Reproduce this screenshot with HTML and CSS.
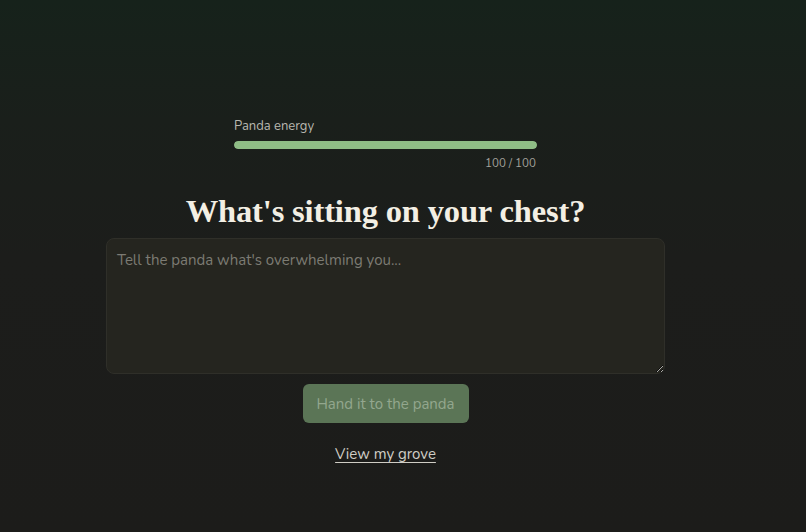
FILE: index.html
```html
<!DOCTYPE html>
<html>
<head>
<meta charset="utf-8">
<link rel="stylesheet" href="styles.css">
</head>
<body>
<main class="page">
  <section class="energy">
    <div class="energy-label">Panda energy</div>
    <div class="energy-track"><div class="energy-fill" style="width:100%"></div></div>
    <div class="energy-count">100 / 100</div>
  </section>
  <h1 class="title">What's sitting on your chest?</h1>
  <textarea class="vent" placeholder="Tell the panda what's overwhelming you..."></textarea>
  <button class="hand" disabled>Hand it to the panda</button>
  <a class="grove" href="#">View my grove</a>
</main>
</body>
</html>
```
FILE: styles.css
```css
html, body {
  margin: 0;
  height: 100%;
}
body {
  background: linear-gradient(180deg, #16221b 0px, #1a1f1b 120px, #1c1d1b 260px, #1c1c1a 100%);
  font-family: "Nunito", "Lato", "Noto Sans", sans-serif;
  color: #e8e6df;
}
.page {
  width: 559px;
  margin-left: 106px;
  padding-top: 118px;
  display: flex;
  flex-direction: column;
  align-items: center;
}
.energy {
  width: 303px;
  display: flex;
  flex-direction: column;
}
.energy-label {
  font-size: 13px;
  color: #b9b8b0;
  line-height: 17px;
}
.energy-track {
  margin-top: 6px;
  height: 8px;
  border-radius: 4px;
  background: #2d302b;
  overflow: hidden;
}
.energy-fill {
  height: 100%;
  background: #8fbd86;
  border-radius: 4px;
}
.energy-count {
  margin-top: 6px;
  font-size: 11.6px;
  color: #a3a29b;
  text-align: right;
  line-height: 17px;
  padding-right: 1px;
}
.title {
  margin: 18px 0 0;
  font-family: "Liberation Serif", "DejaVu Serif", serif;
  font-weight: 700;
  font-size: 32.5px;
  line-height: 42px;
  color: #f3efe4;
  letter-spacing: -0.15px;
}
.vent {
  box-sizing: border-box;
  margin-top: 6px;
  width: 559px;
  height: 136px;
  background: #25251f;
  border: 1px solid #2f2f29;
  border-radius: 8px;
  padding: 11px 10px;
  font-family: inherit;
  font-size: 15px;
  color: #e8e6df;
  outline: none;
  resize: vertical;
}
.vent::placeholder {
  color: #7c7b73;
}
.hand {
  margin-top: 10px;
  width: 166px;
  height: 39px;
  border: none;
  border-radius: 6px;
  background: #5b7556;
  color: #93a78e;
  font-family: inherit;
  font-size: 15px;
}
.grove {
  margin-top: 21px;
  font-size: 15px;
  color: #cfcdc5;
  text-decoration: underline;
  text-underline-offset: 3px;
}
```
